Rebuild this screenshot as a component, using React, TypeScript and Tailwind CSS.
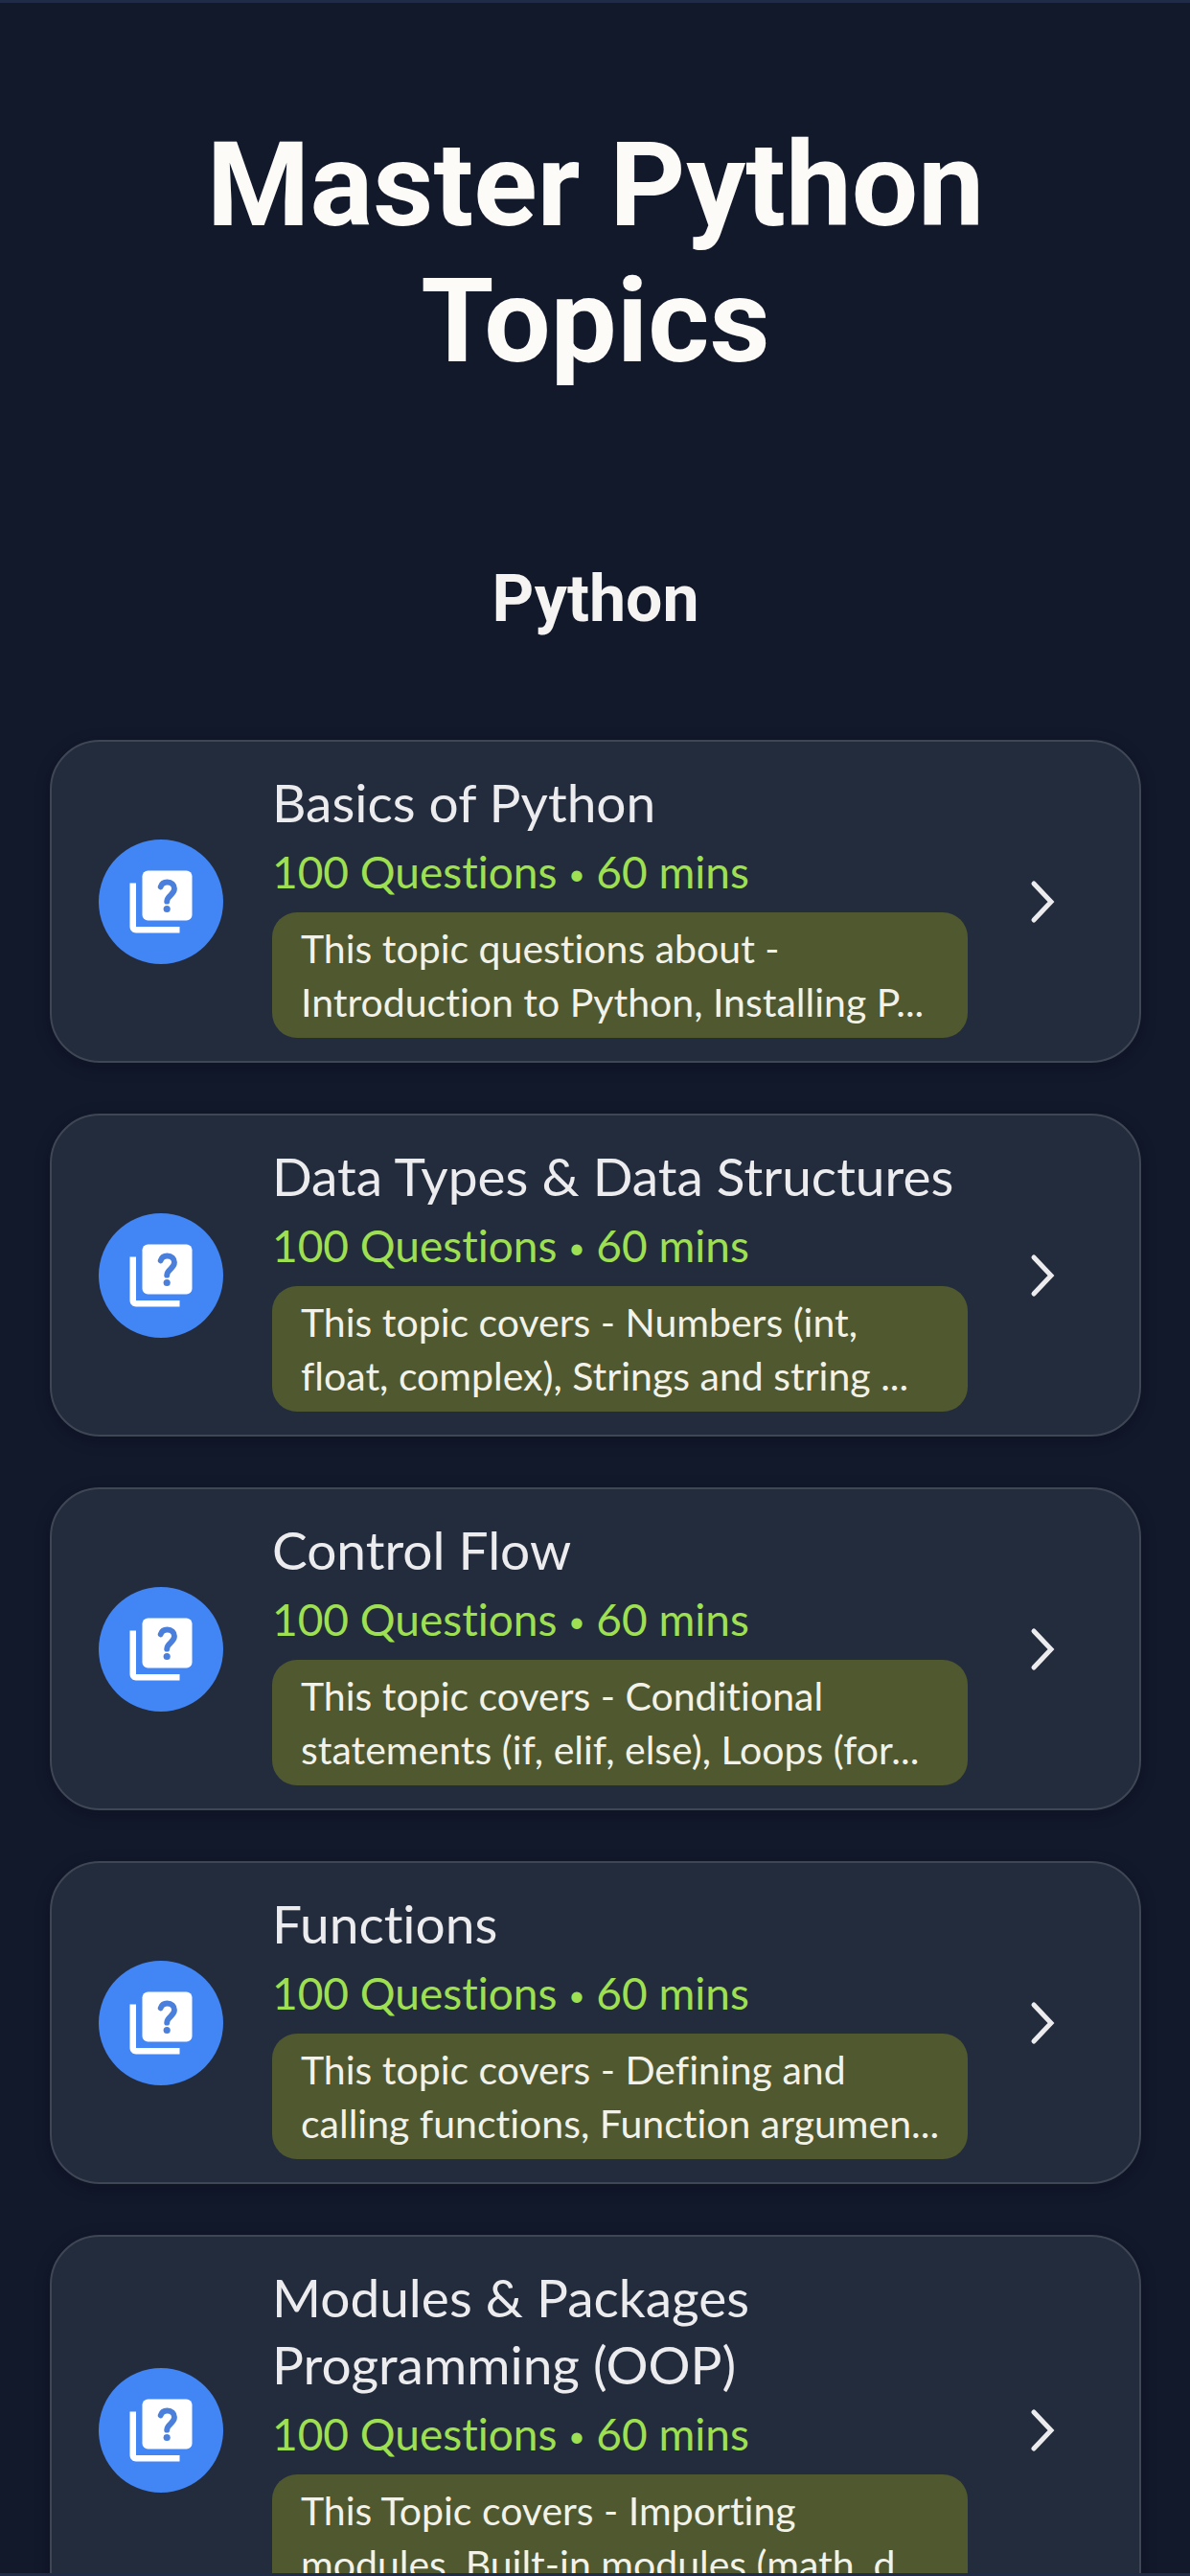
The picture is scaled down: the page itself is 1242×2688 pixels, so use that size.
const topics = [
  { title: ['Basics of Python'], lines: ['This topic questions about -', 'Introduction to Python, Installing P...'] },
  { title: ['Data Types & Data Structures'], lines: ['This topic covers - Numbers (int,', 'float, complex), Strings and string ...'] },
  { title: ['Control Flow'], lines: ['This topic covers - Conditional', 'statements (if, elif, else), Loops (for...'] },
  { title: ['Functions'], lines: ['This topic covers - Defining and', 'calling functions, Function argumen...'] },
  { title: ['Modules & Packages', 'Programming (OOP)'], lines: ['This Topic covers - Importing', 'modules, Built-in modules (math, d...'] },
];

function QuizIcon() {
  return (
    <svg viewBox="0 0 24 24" className="size-[78px]" aria-hidden="true">
      <path fill="#fff" d="M4 6H2v14c0 1.1.9 2 2 2h14v-2H4z" />
      <rect x="6" y="2" width="16" height="16" rx="1.8" fill="#fff" />
      <path d="M11.9 7.2c.3-1 1.1-1.5 2.1-1.5 1.4 0 2.3.9 2.3 2.1 0 2-2.4 2.2-2.4 4.1" fill="none" stroke="#4a80dc" strokeWidth="1.8" strokeLinecap="round" />
      <circle cx="13.9" cy="14.3" r="1.1" fill="#4a80dc" />
    </svg>
  );
}

function Chevron() {
  return (
    <svg viewBox="0 0 28 46" className="h-[46px] w-7 shrink-0" fill="none" stroke="#ececee" strokeWidth="5" strokeLinecap="round" aria-hidden="true">
      <path d="M4 4l18 19L4 42" />
    </svg>
  );
}

export default function App() {
  return (
    <main className="h-screen overflow-hidden border-y-[3px] border-[#202b47] bg-[#12192b] pr-[51px] pl-[52px] font-['Lato',sans-serif] [font-variant-ligatures:none]">
      <h1 className="mt-[119px] text-center font-['Roboto',sans-serif] text-[123px] leading-[142px] font-bold text-[#fcfbf8]">
        Master Python
        <br />
        Topics
      </h1>
      <h2 className="mt-[177px] text-center font-['Roboto',sans-serif] text-[68px] leading-[84px] font-bold text-[#f5f4f2]">Python</h2>
      <ul className="mt-[105px] flex flex-col gap-[53px]">
        {topics.map((topic) => (
          <li key={topic.title[0]}>
            <a href="#" className="flex items-center rounded-[52px] border-2 border-[#3f4755] bg-[#232c3d] py-6 pr-[86px] pl-[49px] shadow-[0_4px_16px_rgba(5,8,20,0.3)]">
              <span className="flex size-[130px] shrink-0 items-center justify-center rounded-full bg-[#4285f4]">
                <QuizIcon />
              </span>
              <span className="mr-[65px] ml-[51px] min-w-0 flex-1 pt-1 whitespace-nowrap">
                {topic.title.map((line) => (
                  <span key={line} className="block text-[55px] leading-[70px] text-[#ececef]">{line}</span>
                ))}
                <span className="mb-1 block text-[46px] leading-[76px] text-[#9fe052]">
                  100 Questions <span className="align-[4px] text-[30px] leading-none">•</span> 60 mins
                </span>
                <span className="block rounded-[26px] bg-[#4f582f] px-[30px] pt-[10px] pb-[9px] text-[41px] leading-[56px] text-[#f2f2e8]">
                  {topic.lines.map((line) => (
                    <span key={line} className="block">{line}</span>
                  ))}
                </span>
              </span>
              <Chevron />
            </a>
          </li>
        ))}
      </ul>
    </main>
  );
}
